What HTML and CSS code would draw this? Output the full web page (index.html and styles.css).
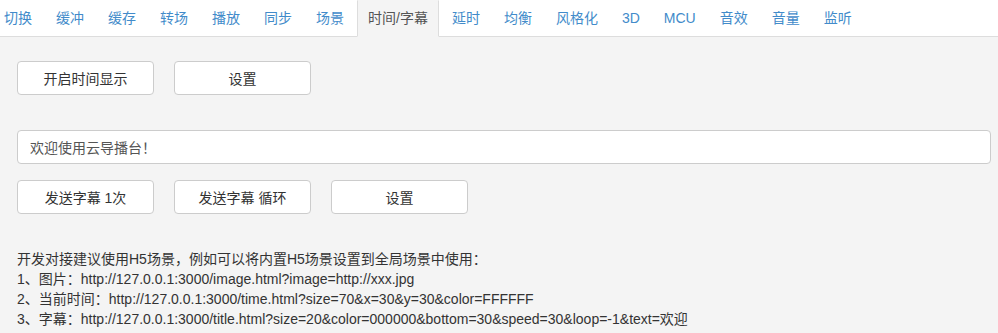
FILE: index.html
```html
<!DOCTYPE html>
<html lang="zh">
    <head>
        <title>时间/字幕</title>
        <link rel="stylesheet" href="styles.css">
    </head>

    <body>
        <ul class="tabs">
            <li><a href="#">切换</a></li>
            <li><a href="#">缓冲</a></li>
            <li><a href="#">缓存</a></li>
            <li><a href="#">转场</a></li>
            <li><a href="#">播放</a></li>
            <li><a href="#">同步</a></li>
            <li><a href="#">场景</a></li>
            <li class="active"><a href="#">时间/字幕</a></li>
            <li><a href="#">延时</a></li>
            <li><a href="#">均衡</a></li>
            <li><a href="#">风格化</a></li>
            <li><a href="#">3D</a></li>
            <li><a href="#">MCU</a></li>
            <li><a href="#">音效</a></li>
            <li><a href="#">音量</a></li>
            <li><a href="#">监听</a></li>
        </ul>

        <div class="panel">
            <div class="btnRow">
                <button class="btn">开启时间显示</button>
                <button class="btn">设置</button>
            </div>

            <input type="text" class="subtitleInput" value="欢迎使用云导播台！">

            <div class="btnRow">
                <button class="btn">发送字幕 1次</button>
                <button class="btn">发送字幕 循环</button>
                <button class="btn">设置</button>
            </div>

            <div class="notes">
                开发对接建议使用H5场景，例如可以将内置H5场景设置到全局场景中使用：<br>
                1、图片：http://127.0.0.1:3000/image.html?image=http://xxx.jpg<br>
                2、当前时间：http://127.0.0.1:3000/time.html?size=70&amp;x=30&amp;y=30&amp;color=FFFFFF<br>
                3、字幕：http://127.0.0.1:3000/title.html?size=20&amp;color=000000&amp;bottom=30&amp;speed=30&amp;loop=-1&amp;text=欢迎
            </div>
        </div>
    </body>
</html>
```

FILE: styles.css
```css
body {
    margin: 0;
    background-color: #f4f4f4;
    font-family: "Liberation Sans", "Noto Sans CJK SC", sans-serif;
    font-size: 14px;
    color: #333;
    overflow: hidden;
}

.tabs {
    display: flex;
    list-style: none;
    margin: 0;
    padding: 0;
    background-color: #fff;
    border-bottom: 1px solid #ddd;
}
.tabs li {
    margin-bottom: -1px;
}
.tabs li:first-child {
    margin-left: -7px;
}
.tabs a {
    display: block;
    margin-right: 2px;
    padding: 7px 10px;
    line-height: 21px;
    border: 1px solid transparent;
    color: #428bca;
    text-decoration: none;
    white-space: nowrap;
}
.tabs .active a {
    color: #555;
    background-color: #f4f4f4;
    border-color: transparent #ddd;
}

.panel {
    padding: 24px 7px 0 17px;
}

.btnRow {
    display: flex;
    gap: 20px;
}
.btn {
    width: 137px;
    height: 34px;
    background-color: #fff;
    border: 1px solid #ccc;
    border-radius: 4px;
    font-family: "Liberation Sans", "Noto Sans CJK SC", sans-serif;
    font-size: 14px;
    color: #333;
    padding: 0;
}

.subtitleInput {
    display: block;
    box-sizing: border-box;
    width: 100%;
    height: 34px;
    margin: 35px 0 16px;
    padding: 0 12px;
    background-color: #fff;
    border: 1px solid #ccc;
    border-radius: 4px;
    font-family: "Liberation Sans", "Noto Sans CJK SC", sans-serif;
    font-size: 14px;
    color: #555;
}

.notes {
    margin-top: 35px;
    line-height: 20px;
    white-space: nowrap;
}
```
